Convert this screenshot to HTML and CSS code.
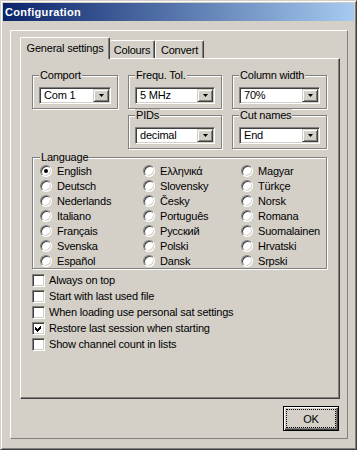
FILE: index.html
```html
<!DOCTYPE html>
<html>
<head>
<meta charset="utf-8">
<link rel="stylesheet" href="styles.css">
</head>
<body>
<div class="window">
  <div class="titlebar">Configuration</div>
  <div class="frame">
    <div class="tabs">
      <div class="tab selected t-general">General settings</div>
      <div class="tab t-colours">Colours</div>
      <div class="tab t-convert">Convert</div>
    </div>
    <div class="page">
      <div class="topgrid">
        <fieldset class="group g-comport">
          <legend>Comport</legend>
          <div class="combo"><span class="combo-text">Com 1</span><span class="drop"><svg width="5" height="3" viewBox="0 0 5 3"><polygon points="0,0 5,0 2.5,3" fill="#000"/></svg></span></div>
        </fieldset>
        <fieldset class="group g-frequ">
          <legend>Frequ. Tol.</legend>
          <div class="combo"><span class="combo-text">5 MHz</span><span class="drop"><svg width="5" height="3" viewBox="0 0 5 3"><polygon points="0,0 5,0 2.5,3" fill="#000"/></svg></span></div>
        </fieldset>
        <fieldset class="group g-colw">
          <legend>Column width</legend>
          <div class="combo"><span class="combo-text">70%</span><span class="drop"><svg width="5" height="3" viewBox="0 0 5 3"><polygon points="0,0 5,0 2.5,3" fill="#000"/></svg></span></div>
        </fieldset>
        <fieldset class="group g-pids">
          <legend>PIDs</legend>
          <div class="combo"><span class="combo-text">decimal</span><span class="drop"><svg width="5" height="3" viewBox="0 0 5 3"><polygon points="0,0 5,0 2.5,3" fill="#000"/></svg></span></div>
        </fieldset>
        <fieldset class="group g-cut">
          <legend>Cut names</legend>
          <div class="combo"><span class="combo-text">End</span><span class="drop"><svg width="5" height="3" viewBox="0 0 5 3"><polygon points="0,0 5,0 2.5,3" fill="#000"/></svg></span></div>
        </fieldset>
      </div>
      <fieldset class="group lang">
        <legend>Language</legend>
        <div class="radios">
          <label class="opt"><span class="radio checked"></span>English</label>
          <label class="opt"><span class="radio"></span>Ελληνικά</label>
          <label class="opt"><span class="radio"></span>Magyar</label>
          <label class="opt"><span class="radio"></span>Deutsch</label>
          <label class="opt"><span class="radio"></span>Slovensky</label>
          <label class="opt"><span class="radio"></span>Türkçe</label>
          <label class="opt"><span class="radio"></span>Nederlands</label>
          <label class="opt"><span class="radio"></span>Česky</label>
          <label class="opt"><span class="radio"></span>Norsk</label>
          <label class="opt"><span class="radio"></span>Italiano</label>
          <label class="opt"><span class="radio"></span>Português</label>
          <label class="opt"><span class="radio"></span>Romana</label>
          <label class="opt"><span class="radio"></span>Français</label>
          <label class="opt"><span class="radio"></span>Русский</label>
          <label class="opt"><span class="radio"></span>Suomalainen</label>
          <label class="opt"><span class="radio"></span>Svenska</label>
          <label class="opt"><span class="radio"></span>Polski</label>
          <label class="opt"><span class="radio"></span>Hrvatski</label>
          <label class="opt"><span class="radio"></span>Español</label>
          <label class="opt"><span class="radio"></span>Dansk</label>
          <label class="opt"><span class="radio"></span>Srpski</label>
        </div>
      </fieldset>
      <div class="checks">
        <label class="chk"><span class="box"></span>Always on top</label>
        <label class="chk"><span class="box"></span>Start with last used file</label>
        <label class="chk"><span class="box"></span>When loading use personal sat settings</label>
        <label class="chk"><span class="box"><svg width="9" height="9" viewBox="0 0 9 9" shape-rendering="crispEdges"><polygon points="1,3 3,5 7,1 7,4 3,8 1,6" fill="#000"/></svg></span>Restore last session when starting</label>
        <label class="chk"><span class="box"></span>Show channel count in lists</label>
      </div>
    </div>
    <div class="buttons">
      <div class="btn"><div class="btn-focus">OK</div></div>
    </div>
  </div>
</div>
</body>
</html>
```

FILE: styles.css
```css
html, body {
  margin: 0;
  padding: 0;
  background: #d4d0c8;
}
body {
  font-family: "Liberation Sans", Arial, sans-serif;
  font-size: 11px;
  letter-spacing: -0.2px;
  color: #000;
}
.window {
  box-sizing: border-box;
  width: 357px;
  height: 450px;
  border: 1px solid;
  border-color: #d4d0c8 #404040 #404040 #d4d0c8;
  box-shadow: inset 1px 1px #fff, inset -1px -1px #808080;
  padding: 2px;
  display: flex;
  flex-direction: column;
  background: #d4d0c8;
}
.titlebar {
  height: 18px;
  flex: none;
  display: flex;
  align-items: center;
  padding-left: 2px;
  background: linear-gradient(to right, #0a246a, #a6caf0);
  color: #fff;
  font-weight: bold;
  font-size: 11px;
  letter-spacing: 0.3px;
}
.frame {
  box-sizing: border-box;
  height: 409px;
  margin: 9px 6px 8px 7px;
  border: 1px solid;
  border-color: #fff #808080 #808080 #fff;
  padding: 6px 7px 7px 9px;
  display: flex;
  flex-direction: column;
}
.tabs {
  height: 21px;
  display: flex;
  align-items: flex-end;
  flex: none;
}
.tab {
  box-sizing: border-box;
  height: 18px;
  border-top: 1px solid #fff;
  border-left: 1px solid #fff;
  border-right: 1px solid #404040;
  box-shadow: inset -1px 0 #808080;
  border-radius: 2px 2px 0 0;
  display: flex;
  align-items: center;
  justify-content: center;
  background: #d4d0c8;
}
.tab.selected {
  height: 22px;
  margin-bottom: -1px;
  position: relative;
  z-index: 1;
  padding-bottom: 1px;
}
.t-general { width: 90px; }
.t-colours { width: 45px; border-left: none; }
.t-convert { width: 49px; }
.page {
  box-sizing: border-box;
  height: 341px;
  flex: none;
  border-top: 1px solid #fff;
  border-left: 1px solid #fff;
  border-right: 1px solid #404040;
  border-bottom: 1px solid #404040;
  box-shadow: inset -1px -1px #808080;
  padding: 10px 0 0 11px;
}
.topgrid {
  display: grid;
  grid-template-columns: 86px 94px 95px;
  grid-template-rows: 40px 40px;
  column-gap: 10px;
}
.g-comport { grid-column: 1; grid-row: 1; }
.g-frequ { grid-column: 2; grid-row: 1; }
.g-colw { grid-column: 3; grid-row: 1; }
.g-pids { grid-column: 2; grid-row: 2; }
.g-cut { grid-column: 3; grid-row: 2; }
.group {
  margin: 0;
  min-width: 0;
  border: 1px solid #808080;
  box-shadow: inset 1px 1px #fff, 1px 1px #fff;
  padding: 6px 6px 2px 6px;
}
.group legend {
  padding: 0 1px;
  line-height: 12px;
  background: #d4d0c8;
}
.combo {
  box-sizing: border-box;
  height: 17px;
  border: 1px solid;
  border-color: #808080 #fff #fff #808080;
  box-shadow: inset 1px 1px #404040, inset -1px -1px #d4d0c8;
  padding: 1px;
  background: #fff;
  display: flex;
}
.combo-text {
  flex: 1;
  padding-left: 3px;
  line-height: 13px;
}
.drop {
  box-sizing: border-box;
  width: 16px;
  height: 13px;
  border: 1px solid;
  border-color: #d4d0c8 #404040 #404040 #d4d0c8;
  box-shadow: inset 1px 1px #fff, inset -1px -1px #808080;
  background: #d4d0c8;
  display: flex;
  align-items: center;
  justify-content: center;
}
.drop svg { display: block; }
.lang {
  margin-top: 2px;
  width: 295px;
  box-sizing: border-box;
  padding: 0 0 0 7px;
}
.radios {
  display: grid;
  grid-template-columns: 103px 98px 1fr;
  grid-auto-rows: 15px;
}
.opt {
  display: flex;
  align-items: center;
  gap: 5px;
  white-space: nowrap;
}
.radio {
  box-sizing: border-box;
  width: 12px;
  height: 12px;
  border-radius: 50%;
  border: 1px solid;
  border-color: #808080 #fff #fff #808080;
  box-shadow: inset 1px 1px #404040, inset -1px -1px #d4d0c8;
  background: #fff;
  flex: none;
  display: flex;
  align-items: center;
  justify-content: center;
}
.radio.checked::after {
  content: "";
  width: 4px;
  height: 4px;
  border-radius: 50%;
  background: #000;
}
.checks {
  margin-top: 3px;
  display: flex;
  flex-direction: column;
}
.chk {
  height: 16px;
  display: flex;
  align-items: center;
  gap: 4px;
  white-space: nowrap;
}
.box {
  box-sizing: border-box;
  width: 13px;
  height: 13px;
  border: 1px solid;
  border-color: #808080 #fff #fff #808080;
  box-shadow: inset 1px 1px #404040, inset -1px -1px #d4d0c8;
  padding: 1px;
  background: #fff;
  flex: none;
}
.box svg { display: block; }
.buttons {
  margin-top: 7px;
  display: flex;
  justify-content: flex-end;
  padding-right: 1px;
}
.btn {
  box-sizing: border-box;
  width: 56px;
  height: 25px;
  border: 1px solid #000;
  box-shadow: inset 1px 1px #fff, inset -1px -1px #404040, inset -2px -2px #808080;
  padding: 2px;
  display: flex;
}
.btn-focus {
  flex: 1;
  border: 1px dotted #000;
  display: flex;
  align-items: center;
  justify-content: center;
}
```
